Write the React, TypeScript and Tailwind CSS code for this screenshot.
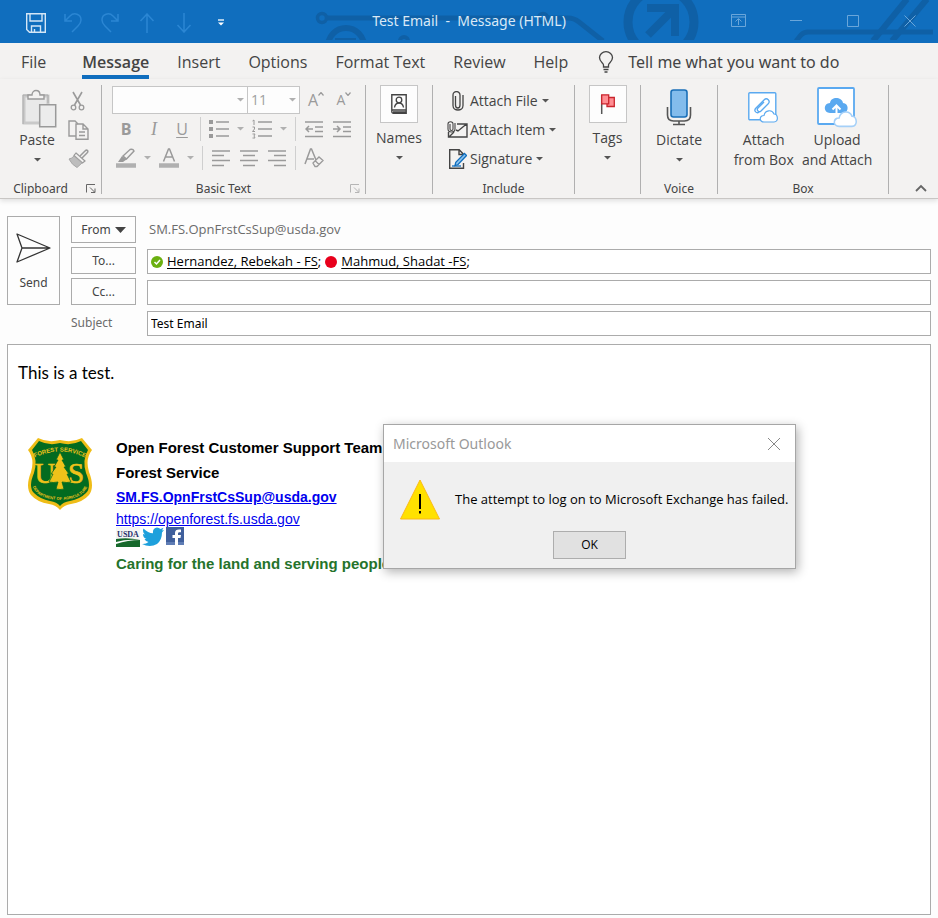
import React from "react";

type Kids = { children?: React.ReactNode };

const GRAY = "#9a9a9a";
const DARK = "#444444";

function Svg({ w, h, children }: Kids & { w: number; h: number }) {
  return (
    <svg width={w} height={h} viewBox={`0 0 ${w} ${h}`} fill="none" className="shrink-0" aria-hidden="true">
      {children}
    </svg>
  );
}

function Caret({ light = false }: { light?: boolean }) {
  return (
    <Svg w={7} h={4}>
      <path d="M0 0h7L3.5 3.5z" fill={light ? "#b0b0b0" : "#555555"} />
    </Svg>
  );
}

/* ---------- title bar ---------- */

function CircuitPattern() {
  return (
    <svg
      className="absolute right-0 top-0"
      width="938"
      height="40"
      viewBox="0 0 938 40"
      fill="none"
      stroke="#0f60a6"
      aria-hidden="true"
    >
      <circle cx="322" cy="18" r="4.5" strokeWidth="3.5" />
      <path d="M327 18H532" strokeWidth="5" />
      <circle cx="346" cy="46" r="18" strokeWidth="6" />
      <path d="M335 39h21" strokeWidth="2" />
      <circle cx="404" cy="41" r="4" strokeWidth="4" />
      <circle cx="543" cy="18" r="4.5" strokeWidth="3.5" />
      <path d="M548 18h20q6 0 11 4l24 19" strokeWidth="5" />
      <circle cx="661" cy="22" r="33" strokeWidth="9" />
      <path d="M647 8h28v28M675 8l-27 27" strokeWidth="8" />
      <path d="M796 41l5-6q3-3 7-3h125" strokeWidth="5" />
      <path d="M873 41L907-1M892 41L927-1" strokeWidth="6" />
    </svg>
  );
}

function TitleBar() {
  const quick = "flex h-8 w-[37px] items-center justify-center";
  const win = "flex h-10 w-[57px] items-center justify-center";
  return (
    <header className="relative flex h-[43px] shrink-0 items-center justify-between bg-[#106ebe] text-[#d9e9f7]">
      <CircuitPattern />
      <div className="relative flex pl-[17px] pt-0.5">
        <button className={quick} aria-label="Save">
          <Svg w={20} h={20}>
            <path d="M.7 .7h18.6v18.6H3.5L.7 16.5zM4 1v7h12V1M5.5 19v-6h9v6M8.5 19v-3" stroke="#d4e6f6" strokeWidth="1.4" />
          </Svg>
        </button>
        <button className={quick} aria-label="Undo">
          <Svg w={20} h={20}>
            <path d="M2 1v7h7M2 8l5-5c4-4 11-2 11 4 0 3-1 4-3 6l-6 6" stroke="#2b86d3" strokeWidth="1.5" />
          </Svg>
        </button>
        <button className={quick} aria-label="Redo">
          <Svg w={20} h={20}>
            <path d="M18 1v7h-7M18 8l-5-5C9-1 2 1 2 7c0 3 1 4 3 6l6 6" stroke="#2b86d3" strokeWidth="1.5" />
          </Svg>
        </button>
        <button className={quick} aria-label="Previous item">
          <Svg w={16} h={20}>
            <path d="M8 20V1M1.500 8L8 1l6.500 7" stroke="#2b86d3" strokeWidth="1.5" />
          </Svg>
        </button>
        <button className={quick} aria-label="Next item">
          <Svg w={16} h={20}>
            <path d="M8 0v19M1.500 12L8 19l6.500-7" stroke="#2b86d3" strokeWidth="1.5" />
          </Svg>
        </button>
        <button className={quick} aria-label="Customize toolbar">
          <Svg w={6} h={7}>
            <path d="M0 1h6" stroke="#fff" strokeWidth="1.3" />
            <path d="M0 3.500h6L3 6.500z" fill="#fff" />
          </Svg>
        </button>
      </div>
      <h1 className="pointer-events-none absolute inset-x-0 pb-0.5 text-center font-['Noto_Sans',sans-serif] text-sm whitespace-pre">
        Test Email  -  Message (HTML)
      </h1>
      <div className="relative flex pb-0.5">
        <button className={win} aria-label="Ribbon display options">
          <Svg w={15} h={13}>
            <path d="M.5 .5h14v12H.5zM.5 3h14M7.500 11V5M4.500 7.500l3-3 3 3" stroke="#6aa6da" />
          </Svg>
        </button>
        <button className={win} aria-label="Minimize">
          <Svg w={12} h={12}>
            <path d="M0 5.500h12" stroke="#6aa6da" />
          </Svg>
        </button>
        <button className={win} aria-label="Maximize">
          <Svg w={12} h={12}>
            <path d="M.5 .5h11v11H.5z" stroke="#6aa6da" />
          </Svg>
        </button>
        <button className={win} aria-label="Close">
          <Svg w={12} h={12}>
            <path d="M.5 .5l11 11M11.500 .5l-11 11" stroke="#6aa6da" />
          </Svg>
        </button>
      </div>
    </header>
  );
}

/* ---------- tabs ---------- */

function Tabs() {
  const tab = "h-9 border-b-4 border-transparent pt-1.5";
  return (
    <nav className="flex h-9 gap-7 pl-[21px] text-base">
      <button className={`${tab} mr-2`}>File</button>
      <button className="h-9 border-b-4 border-[#106ebe] pt-1.5 font-semibold">Message</button>
      <button className={tab}>Insert</button>
      <button className={tab}>Options</button>
      <button className={tab}>Format Text</button>
      <button className={tab}>Review</button>
      <button className={tab}>Help</button>
      <button className={`${tab} flex items-center gap-3.5 pl-0.5 font-['Noto_Sans',sans-serif]`}>
        <Svg w={16} h={22}>
          <path
            d="M5.500 16v-2c0-2-4-3-4-7.500a6.500 5.800 0 0 1 13 0c0 4.500-4 5.500-4 7.500v2zM5.500 18.500h5M6.500 21h3"
            stroke={DARK}
            strokeWidth="1.3"
          />
        </Svg>
        Tell me what you want to do
      </button>
    </nav>
  );
}

/* ---------- ribbon ---------- */

function Launcher({ light = false }: { light?: boolean }) {
  const c = light ? "#b5b5b5" : "#666666";
  return (
    <button className="flex w-5 items-center justify-center" aria-label="More settings">
      <Svg w={10} h={9}>
        <path d="M.5 8.500V.5H9M4 3.500l4.500 4.500M9 4.500v4H5" stroke={c} />
      </Svg>
    </button>
  );
}

function Group({ label, width, launcher, children }: Kids & { label?: string; width: string; launcher?: React.ReactNode }) {
  return (
    <section className={`flex shrink-0 flex-col justify-between border-r border-[#b0b0b0] ${width}`}>
      {children}
      <div className="flex h-3 font-['Noto_Sans',sans-serif] text-xs leading-[14px]">
        <span className="flex-1 text-center">{label}</span>
        {launcher}
      </div>
    </section>
  );
}

function Split() {
  return <span className="mx-1 h-6 w-px bg-[#cfcfcf]" />;
}

function Tool({ label, children }: Kids & { label: string }) {
  return (
    <button className="flex h-7 w-7 items-center justify-center text-[#9a9a9a]" aria-label={label}>
      {children}
    </button>
  );
}

function ToolMenu({ label }: { label: string }) {
  return (
    <button className="flex h-7 w-[15px] items-center justify-center" aria-label={label}>
      <Caret light />
    </button>
  );
}

function Lines({ d }: { d: string }) {
  return (
    <Svg w={18} h={18}>
      <path d={d} stroke={GRAY} strokeWidth="1.5" />
    </Svg>
  );
}

function Clipboard() {
  return (
    <Group label="Clipboard" width="w-[102px]" launcher={<Launcher />}>
      <div className="flex pl-3">
        <button className="flex w-[50px] flex-col items-center pt-1 text-sm leading-5">
          <span className="pb-px pl-1">
            <Svg w={36} h={40}>
              <path d="M3 7h24v27H3z" fill="#e9e9e9" stroke="#c9c9c9" strokeWidth="3" />
              <path d="M2 35V6h7M20 6h7v8" stroke="#ababab" />
              <path d="M7 10V6h4c0-6 8-6 8 0h4v4z" fill="#f3f2f1" stroke="#9a9a9a" strokeWidth="1.4" />
              <path d="M18.700 15.700h16v22h-16z" fill="#ececec" stroke="#9a9a9a" strokeWidth="1.5" />
            </Svg>
          </span>
          Paste
          <span className="flex h-5 items-center">
            <Caret />
          </span>
        </button>
        <div className="flex flex-col gap-px pl-0.5 pt-0.5">
          <Tool label="Cut">
            <Svg w={16} h={21}>
              <path d="M3 1l7.500 13M12 1L4.500 14" stroke={GRAY} strokeWidth="1.6" />
              <circle cx="3.500" cy="16.500" r="2.300" stroke={GRAY} strokeWidth="1.3" />
              <circle cx="11.500" cy="16.500" r="2.300" stroke={GRAY} strokeWidth="1.3" />
            </Svg>
          </Tool>
          <Tool label="Copy">
            <Svg w={21} h={20}>
              <path d="M8 16H1V1h6l3 3" stroke={GRAY} strokeWidth="1.4" />
              <path d="M8 4h7l5 5v10.300H8zM15 4v5h5M11 12h6M11 15.500h6" stroke={GRAY} strokeWidth="1.4" />
            </Svg>
          </Tool>
          <Tool label="Format painter">
            <Svg w={21} h={20}>
              <path d="M12 7l5-5c2-2 4 0 2 2l-5 5" stroke={GRAY} strokeWidth="1.5" />
              <path d="M8 4l9 8-2.500 2L6 6.500z" fill="#f3f2f1" stroke={GRAY} strokeWidth="1.2" />
              <path d="M6 7l8 7-5 4.500Q4 16 1 10q3-.5 5-3z" fill="#bdbdbd" stroke="#a8a8a8" />
            </Svg>
          </Tool>
        </div>
      </div>
    </Group>
  );
}

function BasicText() {
  return (
    <Group label="Basic Text" width="w-[264px]" launcher={<Launcher light />}>
      <div className="flex flex-col pl-[10px]">
        <div className="flex h-[30px] items-center">
          <div className="relative w-[136px]">
            <select aria-label="Font" className="h-7 w-full appearance-none border border-[#c6c6c6] bg-[#fdfdfd]" />
            <span className="pointer-events-none absolute right-1 top-3">
              <Caret light />
            </span>
          </div>
          <div className="relative w-[52px]">
            <select
              aria-label="Font size"
              className="h-7 w-full appearance-none border border-l-0 border-[#c6c6c6] bg-[#fdfdfd] pl-[3px] text-sm text-[#a0a0a0]"
            >
              <option>11</option>
            </select>
            <span className="pointer-events-none absolute right-1 top-3">
              <Caret light />
            </span>
          </div>
          <button className="flex h-7 w-7 items-center justify-center pl-1 text-base text-[#9a9a9a]" aria-label="Grow font">
            A
            <span className="pb-3">
              <Svg w={6} h={4}>
                <path d="M.5 3.500l2.500-3 2.500 3" stroke={GRAY} strokeWidth="1.2" />
              </Svg>
            </span>
          </button>
          <button className="flex h-7 w-7 items-center justify-center pl-1 text-sm text-[#9a9a9a]" aria-label="Shrink font">
            A
            <span className="pb-3">
              <Svg w={6} h={4}>
                <path d="M.5 .5l2.500 3 2.500-3" stroke={GRAY} strokeWidth="1.2" />
              </Svg>
            </span>
          </button>
        </div>
        <div className="flex h-7 items-center">
          <Tool label="Bold">
            <span className="font-bold">B</span>
          </Tool>
          <Tool label="Italic">
            <span className="font-['Liberation_Serif',serif] text-lg italic">I</span>
          </Tool>
          <Tool label="Underline">
            <span className="underline underline-offset-2">U</span>
          </Tool>
          <Split />
          <Tool label="Bullets">
            <Svg w={20} h={18}>
              <path d="M0 2h4M0 9h4M0 16h4" stroke={GRAY} strokeWidth="4" />
              <path d="M7 2h13M7 9h13M7 16h13" stroke={GRAY} strokeWidth="1.5" />
            </Svg>
          </Tool>
          <ToolMenu label="Bullet styles" />
          <Tool label="Numbering">
            <Svg w={20} h={20}>
              <path d="M.5 2L2 1v5M.5 8h2v2l-2 2.500h2.500M.5 15h2.500l-1 2 1 2H.5" stroke={GRAY} />
              <path d="M6 3h14M6 10h14M6 17h14" stroke={GRAY} strokeWidth="1.5" />
            </Svg>
          </Tool>
          <ToolMenu label="Number styles" />
          <Split />
          <Tool label="Decrease indent">
            <Lines d="M0 2h18M10 7h8M10 11.500h8M0 16.500h18M1 9h7M4 6L1 9l3 3" />
          </Tool>
          <Tool label="Increase indent">
            <Lines d="M0 2h18M10 7h8M10 11.500h8M0 16.500h18M0 9h7M4 6l3 3-3 3" />
          </Tool>
        </div>
        <div className="flex h-[30px] items-center">
          <Tool label="Highlight">
            <Svg w={20} h={20}>
              <path d="M0 17.500h20" stroke="#b0b0b0" strokeWidth="4.500" />
              <path d="M7 8l7-6.500q3-1 4 1.500L10.500 11z" stroke={GRAY} strokeWidth="1.4" />
              <path d="M6 8l4.500 3.500L7 14H2z" fill={GRAY} />
            </Svg>
          </Tool>
          <ToolMenu label="Highlight colours" />
          <Tool label="Font color">
            <Svg w={20} h={20}>
              <path d="M0 17.500h20" stroke="#b0b0b0" strokeWidth="4.500" />
              <path d="M4.500 13.500L9.500 1h1l5 12.500M6.500 9h7" stroke={GRAY} strokeWidth="1.5" />
            </Svg>
          </Tool>
          <ToolMenu label="Font colours" />
          <Split />
          <Tool label="Align left">
            <Lines d="M0 2h18M0 6.500h12M0 11.500h18M0 16.500h12" />
          </Tool>
          <Tool label="Center">
            <Lines d="M0 2h18M3 6.500h12M0 11.500h18M3 16.500h12" />
          </Tool>
          <Tool label="Align right">
            <Lines d="M0 2h18M6 6.500h12M0 11.500h18M6 16.500h12" />
          </Tool>
          <Split />
          <Tool label="Clear formatting">
            <Svg w={20} h={20}>
              <path d="M1 16L6.500 1h1L12 12M3 11h7" stroke={GRAY} strokeWidth="1.5" />
              <path d="M9 15l6-6 4 3.500-6 6h-2zM11 12.500l4 4" fill="#f3f2f1" stroke={GRAY} strokeWidth="1.3" />
            </Svg>
          </Tool>
        </div>
      </div>
    </Group>
  );
}

function Boxed({ label, children }: Kids & { label: string }) {
  return (
    <button className="flex flex-col items-center text-sm leading-5">
      <span className="mb-[5px] flex h-[38px] w-[38px] items-center justify-center border border-[#c6c6c6] bg-[#fdfdfd]">{children}</span>
      {label}
      <span className="flex h-5 items-center">
        <Caret />
      </span>
    </button>
  );
}

function IncludeRow({ label, children }: Kids & { label: string }) {
  return (
    <button className="flex h-[29px] items-center text-sm">
      <span className="flex w-[25px] items-center justify-center">{children}</span>
      <span className="pr-1">{label}</span>
      <Caret />
    </button>
  );
}

const cloud = "M4 12C-1 12-1 5.500 4 5.500 5 0 12-1 14 4c4 0 5 8 0 8z";

function Ribbon() {
  return (
    <div className="flex border-b border-[#c8c6c4] pb-1 pt-1.5 shadow-[0_2px_5px_rgba(0,0,0,0.12)]">
      <div className="flex h-[109px] flex-1">
        <Clipboard />
        <BasicText />
        <Group width="w-[67px]">
          <Boxed label="Names">
            <Svg w={16} h={20}>
              <path d="M.8 .8h14.400v18.400H2.500Q.8 19.200.8 17.500zM1 16h14M2 18h13" stroke={DARK} strokeWidth="1.4" />
              <circle cx="8" cy="6" r="2.800" stroke={DARK} strokeWidth="1.3" />
              <path d="M3.500 13.500c1-6 8-6 9 0" stroke={DARK} strokeWidth="1.3" />
            </Svg>
          </Boxed>
        </Group>
        <Group label="Include" width="w-[142px]">
          <div className="flex flex-col pl-3 pt-px">
            <IncludeRow label="Attach File">
              <Svg w={12} h={20}>
                <path d="M3.500 5v9c0 4 4.500 4 4.500 0V4c0-4.500-7-4.500-7 0v10.500c0 6 10 6 10 0V4" stroke={DARK} strokeWidth="1.3" />
              </Svg>
            </IncludeRow>
            <IncludeRow label="Attach Item">
              <Svg w={21} h={18}>
                <path d="M10 3h10v13H1.500V11M9 9l2 1 8.500-7M2 16l5-5" stroke={DARK} strokeWidth="1.4" />
                <path d="M3 3v5c0 2 3 2 3 0V3c0-3-5-3-5 0v5c0 4 7 4 7 0V2" stroke={DARK} strokeWidth="1.1" />
              </Svg>
            </IncludeRow>
            <IncludeRow label="Signature">
              <Svg w={19} h={20}>
                <path d="M15.500 14v5.200H1.700V.7h9.500l4.300 4.500M11 1v4.500h4" stroke={DARK} strokeWidth="1.4" />
                <path d="M16.500 4.500l2 2-8.500 9-3 1 .8-3.200z" fill="#8cc4f0" stroke="#106ebe" strokeWidth="1.300" />
                <path d="M4 17h9" stroke="#106ebe" strokeWidth="1.300" />
              </Svg>
            </IncludeRow>
          </div>
        </Group>
        <Group width="w-[66px]">
          <Boxed label="Tags">
            <Svg w={16} h={20}>
              <path d="M1.700 1v19" stroke="#555" strokeWidth="1.5" />
              <path d="M7 3.500h7.300v9H7z" fill="#ff8d92" stroke="#c9252d" strokeWidth="1.3" />
              <path d="M1.700 .8h7v9h-7z" fill="#ff8d92" stroke="#c9252d" strokeWidth="1.3" />
            </Svg>
          </Boxed>
        </Group>
        <Group label="Voice" width="w-[77px]">
          <button className="flex flex-col items-center pt-1 text-sm leading-5">
            <Svg w={26} h={41}>
              <path d="M1.500 18v8q0 6 6 6h11q6 0 6-6v-8M13 32v3M7 35.500h12" stroke="#555" strokeWidth="1.6" />
              <rect x="5" y="1" width="16" height="27" rx="2.500" fill="#83bcec" stroke="#1a6fb8" strokeWidth="1.600" />
            </Svg>
            Dictate
            <span className="flex h-5 items-center">
              <Caret />
            </span>
          </button>
        </Group>
        <Group label="Box" width="w-[171px]">
          <div className="flex justify-center gap-2 text-sm leading-5">
            <button className="flex flex-col items-center">
              <span className="flex h-[45px] items-center">
                <Svg w={31} h={31}>
                  <rect x=".8" y=".8" width="27" height="27" rx="1" fill="#fff" stroke="#5aa9f0" strokeWidth="1.4" />
                  <path
                    d="M8 16l8-8c3-3 7 1 4 4l-7 7c-2 2-5-1-3-3l6-6M11 20c-2 2-6-1-3-4"
                    stroke="#5aa9f0"
                    strokeWidth="1.3"
                  />
                  <g transform="translate(12 18)">
                    <path d={cloud} fill="#fff" stroke="#5aa9f0" strokeWidth="1.200" />
                  </g>
                </Svg>
              </span>
              Attach
              <span>from Box</span>
            </button>
            <button className="flex flex-col items-center">
              <span className="flex h-[45px] items-center">
                <Svg w={41} h={41}>
                  <rect x="1" y="1" width="36" height="36" rx="1" fill="#fff" stroke="#5aa9f0" strokeWidth="1.800" />
                  <path d="M13 26c-7 0-7-10 0-10 1-7 12-6 13 0 6 0 6 9 1 10z" fill="#5aa9f0" />
                  <path d="M19.500 27V19M15.500 22.500l4-4 4 4" stroke="#fff" strokeWidth="2" />
                  <g transform="translate(17 24) scale(1.280)">
                    <path d={cloud} fill="#fff" stroke="#a5d0f8" strokeWidth="1.200" />
                  </g>
                </Svg>
              </span>
              Upload
              <span>and Attach</span>
            </button>
          </div>
        </Group>
        <div className="flex flex-1 items-end justify-end pb-0.5 pr-[11px]">
          <button aria-label="Collapse ribbon">
            <Svg w={12} h={8}>
              <path d="M1 7l5-5 5 5" stroke="#666" strokeWidth="1.800" />
            </Svg>
          </button>
        </div>
      </div>
    </div>
  );
}

/* ---------- address fields ---------- */

function Address() {
  const btn = "flex h-[27px] items-center justify-center gap-1 border border-[#ababab] bg-[#fdfdfd] text-[#444444]";
  const field = "h-[25px] w-full self-end border border-[#ababab] bg-white px-[3px] text-black";
  return (
    <div className="flex gap-[11px] font-['Noto_Sans',sans-serif] text-xs">
      <button className="flex h-[89px] w-[53px] shrink-0 flex-col items-center justify-center gap-3 border border-[#ababab] bg-[#fdfdfd] pt-0.5 text-[#444444]">
        <Svg w={35} h={30}>
          <path d="M1 1l33 14L1 29l5-14zM6 15h28" stroke="#333" strokeWidth="1.3" strokeLinejoin="round" />
        </Svg>
        Send
      </button>
      <div className="grid flex-1 grid-cols-[65px_1fr] gap-x-[11px] gap-y-1">
        <button className={btn}>
          From
          <Svg w={11} h={6}>
            <path d="M0 0h11L5.500 6z" fill="#444" />
          </Svg>
        </button>
        <span className="flex h-[27px] items-center pl-0.5 font-['Open_Sans',sans-serif] text-[13px] text-[#6b6b6b]">
          SM.FS.OpnFrstCsSup@usda.gov
        </span>

        <button className={btn}>To...</button>
        <div className={`flex items-center gap-1 font-['Open_Sans',sans-serif] text-[13px] ${field}`}>
          <Svg w={12} h={12}>
            <circle cx="6" cy="6" r="6" fill="#6bb011" />
            <path d="M3.500 6l2 2 3.500-4" stroke="#fff" strokeWidth="1.500" />
          </Svg>
          <span>
            <a href="#rebekah" className="underline underline-offset-2">Hernandez, Rebekah - FS</a>;
          </span>
          <Svg w={12} h={12}>
            <circle cx="6" cy="6" r="6" fill="#e8001c" />
          </Svg>
          <span>
            <a href="#shadat" className="underline underline-offset-2">Mahmud, Shadat -FS</a>;
          </span>
          <input aria-label="To" className="min-w-0 flex-1 outline-none" />
        </div>

        <button className={btn}>Cc...</button>
        <input aria-label="Cc" className={field} />

        <label htmlFor="subject" className="flex h-[27px] items-center text-[#6b6b6b]">Subject</label>
        <input id="subject" defaultValue="Test Email" className={field} />
      </div>
    </div>
  );
}

/* ---------- message ---------- */

function Shield() {
  return (
    <svg width="66" height="75" viewBox="0 -1 66 75" className="shrink-0" role="img" aria-label="Forest Service shield">
      <defs>
        <path id="arc-top" d="M7 21Q33 8 59 21" />
        <path id="arc-bottom" d="M5 46Q7 62 33 63Q59 62 61 46" />
      </defs>
      <path
        d="M11 1Q21 6 33 3Q45 6 55 1L65 13Q58 22 62 35Q68 50 62 58Q56 65 44 67Q37 68 33 73Q29 68 22 67Q10 65 4 58Q-2 50 4 35Q8 22 1 13z"
        fill="#efbd17"
      />
      <path
        d="M12 4Q22 9 33 6Q44 9 54 4L61 13Q55 23 59 36Q65 50 59 56Q53 62 43 64Q36 65 33 69Q30 65 23 64Q13 62 7 56Q1 50 7 36Q11 23 5 13z"
        fill="#036b20"
      />
      <g fill="#efc21a" fontFamily="'Liberation Sans', Arial, sans-serif">
        <text fontSize="6" fontWeight="bold">
          <textPath href="#arc-top" startOffset="50%" textAnchor="middle">FOREST SERVICE</textPath>
        </text>
        <text fontSize="4" fontWeight="bold">
          <textPath href="#arc-bottom" startOffset="50%" textAnchor="middle">DEPARTMENT OF AGRICULTURE</textPath>
        </text>
        <g fontFamily="'Liberation Serif', 'Times New Roman', serif" fontSize="29" textAnchor="middle" stroke="#efc21a" strokeWidth=".6">
          <text x="18" y="46">U</text>
          <text x="49" y="46">S</text>
        </g>
        <path
          d="M33 15l4 8h-2l4 7h-2l5 7h-2l4 8q-4 1-9 0l2 7q-4 1-8 0l2-7q-5 1-9 0l4-8h-2l5-7h-2l4-7h-2z"
          stroke="#036b20"
          strokeWidth=".8"
        />
      </g>
    </svg>
  );
}

function Signature() {
  return (
    <div className="flex gap-[23px] pl-[9px] font-['Liberation_Sans',Arial,sans-serif] text-[15px] text-black">
      <Shield />
      <div className="font-bold">
        <p className="h-[25px] leading-6">Open Forest Customer Support Team</p>
        <p className="h-6 leading-6">Forest Service</p>
        <p className="h-6 text-sm leading-6">
          <a href="mailto:SM.FS.OpnFrstCsSup@usda.gov" className="text-[#0000ee] underline">SM.FS.OpnFrstCsSup@usda.gov</a>
        </p>
        <p className="h-[18px] text-sm leading-5 font-normal">
          <a href="https://openforest.fs.usda.gov" className="text-[#0000ee] underline">https://openforest.fs.usda.gov</a>
        </p>
        <div className="flex h-5 gap-0.5">
          <a href="#usda" aria-label="USDA">
            <Svg w={24} h={20}>
              <rect width="24" height="20" fill="#f4f6f4" />
              <text x="12" y="10" fontSize="8" fontWeight="bold" textAnchor="middle" fill="#27306b" fontFamily="'Liberation Serif', serif">USDA</text>
              <path d="M0 12q12-2 24 1v7H0z" fill="#17692c" />
              <path d="M0 15q10-3 24-2-12 0-24 4z" fill="#fff" />
            </Svg>
          </a>
          <a href="#twitter" aria-label="Twitter">
            <Svg w={22} h={20}>
              <path
                d="M0 17q4 .3 6.500-2-3-.5-4-3h2Q1 11 1 7l2 .5Q0 5 1.500 1.500 6 6 11 6.300 10.500 1 15 .5q2 0 3.500 1.500L21.500 .8 20 3.500l2-.5-2 2.500Q20 13 15 17 8 21 0 17z"
                fill="#1ea0dc"
              />
            </Svg>
          </a>
          <a href="#facebook" aria-label="Facebook">
            <Svg w={18} h={18}>
              <rect width="18" height="18" fill="#3f5f9c" />
              <path d="M0 15h18v3H0z" fill="#5f7db5" />
              <path d="M9 18v-7H6.500V8H9V6c0-3 2-4 6-3.500v2.700c-2-.2-3 0-3 1.500V8h3l-.5 3H12v7z" fill="#fff" />
            </Svg>
          </a>
        </div>
        <p className="pt-[5px] leading-6 text-[#25732b]">Caring for the land and serving people</p>
      </div>
    </div>
  );
}

function Dialog() {
  return (
    <div
      role="dialog"
      aria-labelledby="dialog-title"
      className="absolute left-[375px] top-[79px] w-[413px] border border-[#a6a6a6] bg-[#f0f0f0] text-xs text-black shadow-[2px_3px_10px_rgba(0,0,0,0.3)]"
    >
      <div className="flex h-[37px] items-center justify-between bg-white pl-[9px] pr-[14px]">
        <h2 id="dialog-title" className="font-['Noto_Sans',sans-serif] text-sm text-[#999999]">Microsoft Outlook</h2>
        <button aria-label="Close dialog">
          <Svg w={14} h={14}>
            <path d="M1 1l12 12M13 1L1 13" stroke="#888" />
          </Svg>
        </button>
      </div>
      <div className="flex items-center gap-[15px] pl-4 pt-[17px]">
        <Svg w={40} h={41}>
          <path d="M20 1L39.500 40H.5z" fill="#ffe100" stroke="#fbb917" />
          <path d="M20 15v15M20 32v2.500" stroke="#000" strokeWidth="2" />
        </Svg>
        <p className="whitespace-nowrap text-[13px]">The attempt to log on to Microsoft Exchange has failed.</p>
      </div>
      <div className="flex justify-center pb-[9px] pt-[11px]">
        <button className="h-7 w-[73px] border border-[#adadad] bg-[#e1e1e1]">OK</button>
      </div>
    </div>
  );
}

export default function App() {
  return (
    <div className="flex min-h-screen flex-col bg-[#fdfdfd] font-['Open_Sans','Noto_Sans',sans-serif] text-[#444444]">
      <TitleBar />
      <div className="bg-[#f3f2f1]">
        <Tabs />
        <Ribbon />
      </div>
      <main className="flex flex-1 flex-col gap-2 px-[7px] pb-[3px] pt-[17px]">
        <Address />
        <article className="relative flex-1 border border-[#ababab] bg-white px-[10px] pt-4">
          <p className="mb-[51px] font-['Lato',sans-serif] text-[17px] leading-6 text-black">This is a test.</p>
          <Signature />
          <Dialog />
        </article>
      </main>
    </div>
  );
}
